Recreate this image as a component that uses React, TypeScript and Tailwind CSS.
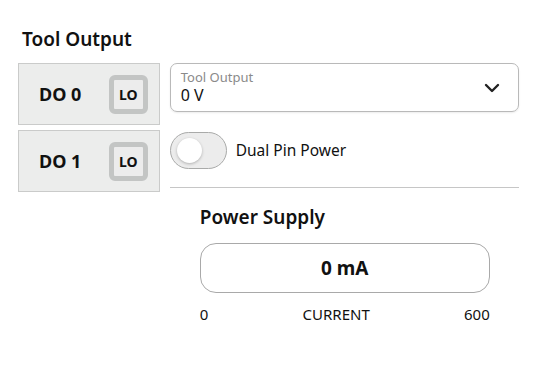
import React from 'react';

const font = { fontFamily: '"Noto Sans", "Open Sans", sans-serif' };

const OutputBox = ({ label }: { label: string }) => (
  <div className="flex h-[62px] items-center justify-between border border-[#cacbca] bg-[#ecedec] pl-[20px] pr-[11px]">
    <span className="text-[18px] font-bold text-[#111]">{label}</span>
    <div className="flex h-[39px] w-[39px] items-center justify-center rounded-[6px] border-[5px] border-[#c3c5c4] bg-[#ececec]">
      <span className="text-[14px] font-bold text-[#111]">LO</span>
    </div>
  </div>
);

export default function App() {
  return (
    <div className="h-[368px] w-[537px] bg-white px-[18px] pt-[27px]" style={font}>
      <h1 className="mb-[12px] pl-[4px] text-[19px] font-semibold leading-[24px] text-[#111]">Tool Output</h1>

      <div className="flex gap-[10px]">
        {/* Digital outputs */}
        <div className="flex w-[142px] flex-col gap-[5px]">
          <OutputBox label="DO 0" />
          <OutputBox label="DO 1" />
        </div>

        {/* Settings */}
        <div className="flex w-[350px] flex-col">
          <div className="flex h-[49px] items-center justify-between rounded-[7px] border border-[#b9b9b9] pl-[10px] pr-[18px] shadow-[0_1px_2px_rgba(0,0,0,0.08)]">
            <div className="flex flex-col">
              <span className="text-[13px] leading-[16px] text-[#8a8a8a]">Tool Output</span>
              <span className="text-[16px] leading-[21px] text-[#111]">0 V</span>
            </div>
            <svg width="16" height="10" viewBox="0 0 16 10" fill="none">
              <path d="M2 2l6 6 6-6" stroke="#222" strokeWidth="2.4" strokeLinecap="round" strokeLinejoin="round" />
            </svg>
          </div>

          <div className="mt-[20px] flex items-center gap-[9px]">
            <div className="flex h-[37px] w-[57px] items-center rounded-full border border-[#a9aaa9] bg-[#ececec] px-[6px]">
              <div className="h-[25px] w-[25px] rounded-full bg-white shadow-[0_1px_3px_rgba(0,0,0,0.25)]" />
            </div>
            <span className="text-[15.5px] text-[#111]">Dual Pin Power</span>
          </div>

          <div className="mt-[18px] h-px bg-[#c6c6c6]" />

          {/* Power supply */}
          <div className="ml-[30px] w-[290px] pt-[17px]">
            <h2 className="text-[19px] font-semibold leading-[24px] text-[#111]">Power Supply</h2>
            <div className="mt-[14px] flex h-[50px] items-center justify-center rounded-[16px] border border-[#a9a9a9]">
              <span className="text-[19px] font-bold text-[#111]">0 mA</span>
            </div>
            <div className="mt-[10px] flex justify-between text-[15px] text-[#111]">
              <span>0</span>
              <span>CURRENT</span>
              <span>600</span>
            </div>
          </div>
        </div>
      </div>
    </div>
  );
}
